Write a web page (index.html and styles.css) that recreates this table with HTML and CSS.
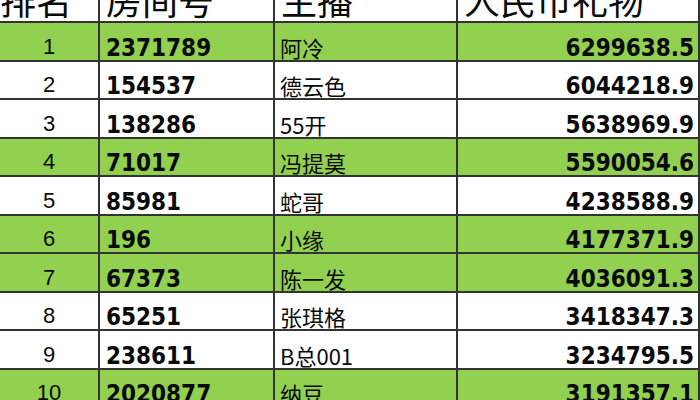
FILE: index.html
```html
<!DOCTYPE html>
<html lang="zh-CN">
<head>
<meta charset="utf-8">
<title>人民币礼物排名</title>
<link rel="stylesheet" href="styles.css">
</head>
<body>
<div class="sheet">
  <div class="row head">
    <div class="cell c0">排名</div>
    <div class="cell c1">房间号</div>
    <div class="cell c2">主播</div>
    <div class="cell c3">人民币礼物</div>
  </div>
  <div class="row green">
    <div class="cell c0 rank">1</div>
    <div class="cell c1 num">2371789</div>
    <div class="cell c2 name">阿冷</div>
    <div class="cell c3 num money">6299638.5</div>
  </div>
  <div class="row">
    <div class="cell c0 rank">2</div>
    <div class="cell c1 num">154537</div>
    <div class="cell c2 name">德云色</div>
    <div class="cell c3 num money">6044218.9</div>
  </div>
  <div class="row">
    <div class="cell c0 rank">3</div>
    <div class="cell c1 num">138286</div>
    <div class="cell c2 name">55开</div>
    <div class="cell c3 num money">5638969.9</div>
  </div>
  <div class="row green">
    <div class="cell c0 rank">4</div>
    <div class="cell c1 num">71017</div>
    <div class="cell c2 name">冯提莫</div>
    <div class="cell c3 num money">5590054.6</div>
  </div>
  <div class="row">
    <div class="cell c0 rank">5</div>
    <div class="cell c1 num">85981</div>
    <div class="cell c2 name">蛇哥</div>
    <div class="cell c3 num money">4238588.9</div>
  </div>
  <div class="row green">
    <div class="cell c0 rank">6</div>
    <div class="cell c1 num">196</div>
    <div class="cell c2 name">小缘</div>
    <div class="cell c3 num money">4177371.9</div>
  </div>
  <div class="row green">
    <div class="cell c0 rank">7</div>
    <div class="cell c1 num">67373</div>
    <div class="cell c2 name">陈一发</div>
    <div class="cell c3 num money">4036091.3</div>
  </div>
  <div class="row">
    <div class="cell c0 rank">8</div>
    <div class="cell c1 num">65251</div>
    <div class="cell c2 name">张琪格</div>
    <div class="cell c3 num money">3418347.3</div>
  </div>
  <div class="row">
    <div class="cell c0 rank">9</div>
    <div class="cell c1 num">238611</div>
    <div class="cell c2 name">B总001</div>
    <div class="cell c3 num money">3234795.5</div>
  </div>
  <div class="row green">
    <div class="cell c0 rank">10</div>
    <div class="cell c1 num">2020877</div>
    <div class="cell c2 name">纳豆</div>
    <div class="cell c3 num money">3191357.1</div>
  </div>
</div>
</body>
</html>
```
FILE: styles.css
```css
html, body {
  margin: 0;
  padding: 0;
  background: #ffffff;
  overflow: hidden;
}

.sheet {
  width: 700px;
  margin-top: -27px;
  color: #0a0a0a;
}

.row {
  display: grid;
  grid-template-columns: 100px 175px 183px 242px;
  height: 38.5px;
  box-sizing: border-box;
  border-bottom: 2px solid #333333;
}

.row.head {
  height: 50px;
}

.row.green {
  background: #92d050;
}

.cell {
  display: flex;
  align-items: flex-end;
  box-sizing: border-box;
  border-right: 2px solid #333333;
  line-height: 1;
  white-space: nowrap;
  overflow: visible;
}

.head .cell {
  font-family: "Noto Sans CJK SC", sans-serif;
  font-size: 36px;
  padding: 0 0 4px 6px;
}

.head .c0 {
  padding-left: 0;
}

.rank {
  justify-content: center;
  font-family: "Liberation Sans", Arial, sans-serif;
  font-size: 22px;
  padding-bottom: 2px;
}

.num {
  font-family: "DejaVu Sans Condensed", "DejaVu Sans", sans-serif;
  font-stretch: condensed;
  font-weight: bold;
  font-size: 24px;
  padding: 0 0 0 6px;
}

.money {
  justify-content: flex-end;
  padding: 0 4px 0 0;
}

.name {
  font-family: "Noto Sans CJK SC", sans-serif;
  font-size: 22px;
  padding: 0 0 2px 5px;
}
```
